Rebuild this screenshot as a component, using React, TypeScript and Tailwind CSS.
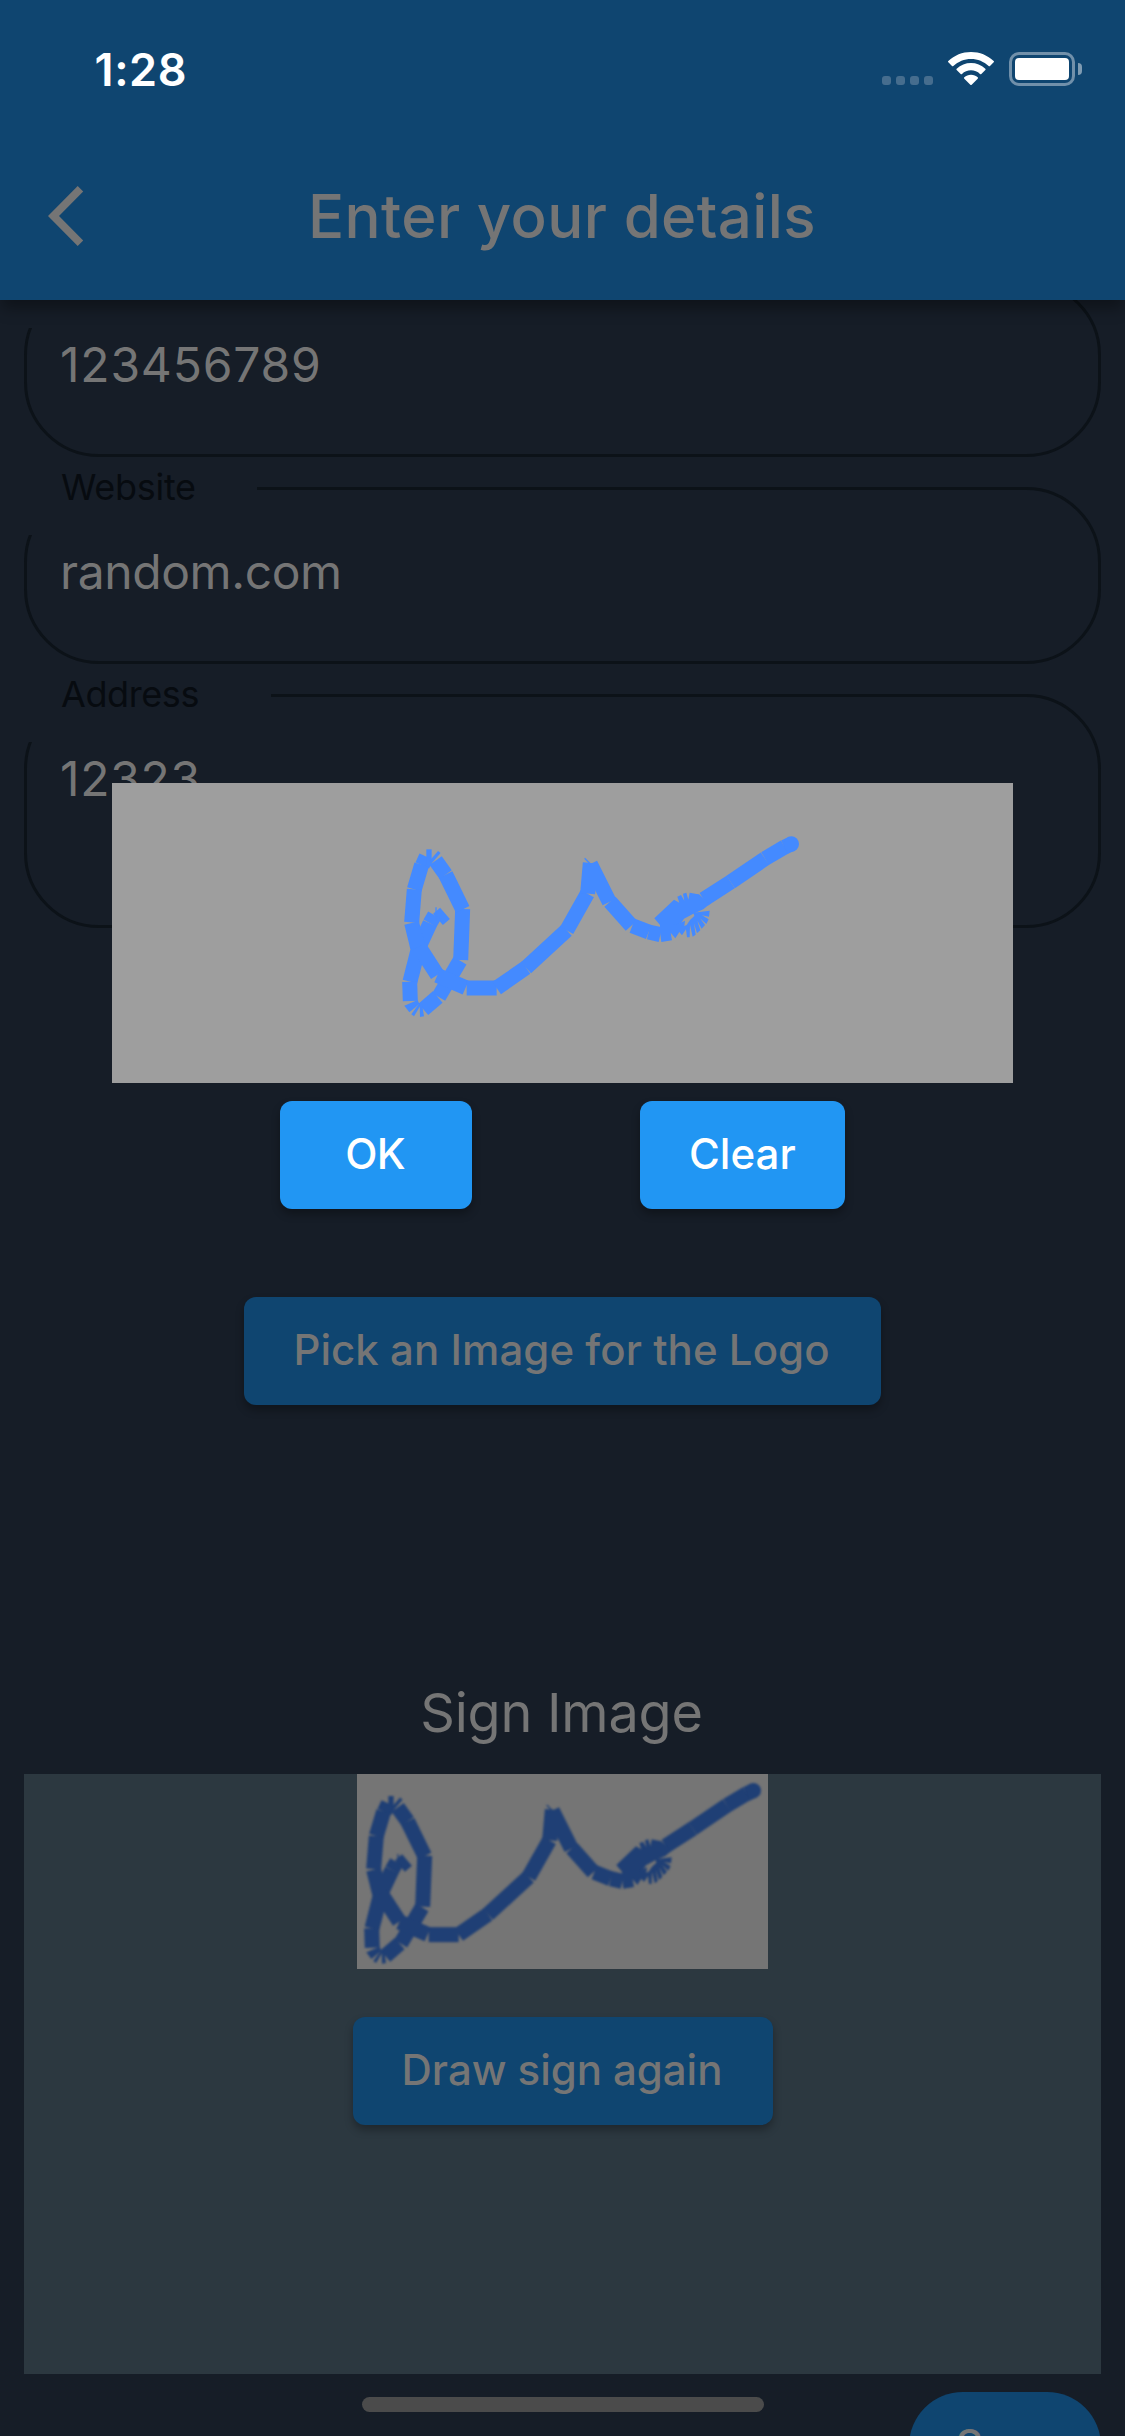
import type { ReactNode } from "react";

type Segment = [number, number, number, number];

const SEGMENTS: Segment[] = [
  [195, 340, 174, 358],
  [164, 346, 150, 370],
  [150, 370, 117, 441],
  [117, 438, 90, 545],
  [89, 545, 91, 603],
  [130, 628, 173, 591],
  [176, 591, 240, 482],
  [242, 480, 248, 327],
  [248, 328, 197, 224],
  [197, 224, 167, 182],
  [139, 170, 127, 196],
  [125, 194, 103, 268],
  [103, 268, 95, 367],
  [95, 369, 113, 442],
  [117, 440, 172, 525],
  [172, 526, 257, 563],
  [260, 564, 350, 564],
  [350, 564, 438, 503],
  [438, 503, 560, 391],
  [560, 391, 622, 281],
  [623, 281, 631, 189],
  [631, 192, 688, 306],
  [690, 305, 754, 377],
  [757, 377, 806, 396],
  [806, 396, 841, 404],
  [971, 298, 1052, 246],
  [1052, 246, 1155, 176],
  [1155, 176, 1214, 141],
];

const LOOP =
  "823,355 882,299 898,308 892,290 903,285 913,302 909,281 919,278 925,299 929,278 950,282 957,283 989,312 970,328 940,341 912,356 904,368 880,380 848,385";
const RING =
  "940,338 989,332 987,350 966,346 986,358 979,372 960,355 975,375 965,386 952,362 961,391 951,400 942,370 947,404 938,410 930,375 929,412 921,412 918,388 906,406 898,396 886,415 872,398 876,421 844,426 840,395 840,375 880,375 898,370 915,362 913,378 920,375 930,360 943,348";

function Signature({ className, viewBox }: { className: string; viewBox: string }) {
  return (
    <svg className={className} viewBox={viewBox} fill="currentColor" stroke="none">
      {SEGMENTS.map(([x1, y1, x2, y2], i) => (
        <line key={i} x1={x1} y1={y1} x2={x2} y2={y2} stroke="currentColor" strokeWidth={45} />
      ))}
      <line x1={1213} y1={142} x2={1234} y2={132} stroke="currentColor" strokeWidth={45} />
      <circle cx={1234} cy={132} r={23} />
      <path d="M168 322V365" stroke="currentColor" strokeWidth={4} />
      <path d="M147 148V195" stroke="currentColor" strokeWidth={16} />
      <path d="M178 156L152 186" stroke="currentColor" strokeWidth={10} />
      <path d="M614 175L632 193" stroke="currentColor" strokeWidth={4} />
      <polygon points="113,600 73,617 88,637 118,612" />
      <polygon points="118,610 94,643 102,649 122,616" />
      <polygon points="119,612 120,651 132,649 126,612" />
      <polygon points={LOOP} />
      <polygon points={RING} />
    </svg>
  );
}

function StatusIcons() {
  return (
    <div className="flex h-[34px] items-start">
      <div className="mb-px flex gap-[5px] self-end">
        {[0, 1, 2, 3].map((i) => (
          <span key={i} className="size-[9px] rounded-[3px] bg-[#466d8e]" />
        ))}
      </div>
      <svg className="ml-[15px] h-[33px] w-[46px]" viewBox="0 0 138 99" fill="white">
        <path d="M69 0C43 0 19 10 1 27Q-1 29 1 31L12 42Q14 44 16 42C30 29 49 21 69 21S108 29 122 42Q124 44 126 42L137 31Q139 29 137 27C119 10 95 0 69 0Z" />
        <path d="M69 33C53 33 38 39 26 50Q24 52 26 54L38 66Q40 68 42 66C49 59 59 55 69 55S89 59 96 66Q98 68 100 66L112 54Q114 52 112 50C100 39 85 33 69 33Z" />
        <path d="M69 68C61 68 54 71 49 76Q47 78 49 80L67 98Q69 100 71 98L89 80Q91 78 89 76C84 71 77 68 69 68Z" />
      </svg>
      <div className="ml-[15px] h-[34px] w-[66px] rounded-[10px] border-[3px] border-[#7190aa] p-[3px]">
        <div className="h-[22px] w-[54px] rounded-[4px] bg-white" />
      </div>
      <div className="ml-[3px] h-3 w-1 self-center rounded-r-full bg-[#7f9bb2]" />
    </div>
  );
}

function Field({ label, value, valueClass, height, notch }: {
  label?: string;
  value: string;
  valueClass: string;
  height: string;
  notch: string;
}) {
  return (
    <div className={`relative rounded-[75px] border-[3px] border-[#0c1218] ${height}`}>
      <div className={`absolute -left-[3px] -top-[3px] h-12 bg-[#161d27] ${notch}`} />
      {label && (
        <span
          className={`absolute left-[34px] -top-[27px] text-[36px] leading-[48px] text-[#070b10] ${
            label === "Website" ? "tracking-[-0.3px]" : "tracking-[-0.4px]"
          }`}
        >
          {label}
        </span>
      )}
      <p className={`relative pl-[33px] pt-[52px] text-[48px] leading-[60px] text-[#757575] ${valueClass}`}>{value}</p>
    </div>
  );
}

function RaisedButton({ className, children }: { className: string; children: ReactNode }) {
  return (
    <button
      className={`flex h-[108px] shrink-0 items-center justify-center rounded-[12px] pb-[3px] text-[42px] font-[550] leading-none whitespace-nowrap shadow-[0_5px_8px_rgba(0,0,0,0.3)] ${className}`}
    >
      {children}
    </button>
  );
}

export default function App() {
  return (
    <div className="relative flex h-[2436px] w-[1125px] flex-col overflow-hidden bg-[#161d27] font-['Inter',sans-serif]">
      <header className="relative z-10 h-[300px] shrink-0 bg-[#0f4570] shadow-[0_10px_14px_-2px_rgba(0,0,0,0.35)]">
        <div className="flex h-[138px] items-center justify-between pl-[94.5px] pr-[43px]">
          <span className="text-[45px] font-semibold leading-none tracking-[0.6px] text-white">1:28</span>
          <StatusIcons />
        </div>
        <div className="relative flex h-[156px] items-center justify-center">
          <svg className="absolute left-12 h-[60px] w-9" viewBox="0 0 36 60" fill="#757575">
            <path d="M29.7 0L35.2 5.5L11 30L35.2 54.5L29.7 60L0 30Z" />
          </svg>
          <h1 className="pr-px text-[60px] font-medium leading-none tracking-[0.38px] text-[#757575]">Enter your details</h1>
        </div>
      </header>

      <main className="-mt-5 flex flex-col px-6">
        <div className="flex flex-col gap-[30px]">
          <Field value="123456789" valueClass="tracking-[0.8px]" height="h-[177px]" notch="w-[233px]" />
          <Field label="Website" value="random.com" valueClass="tracking-[-0.4px]" height="h-[177px]" notch="w-[233px]" />
          <Field label="Address" value="12323" valueClass="tracking-[0.7px]" height="h-[234px]" notch="w-[247px]" />
        </div>

        <RaisedButton className="mt-[369px] w-[637px] self-center bg-[#0f4570] pr-[2px] tracking-[0.05px] text-[#757575]">
          Pick an Image for the Logo
        </RaisedButton>

        <h2 className="mt-[275px] h-[65px] pr-[2px] text-center text-[54px] leading-[65px] tracking-[-0.24px] text-[#757575]">
          Sign Image
        </h2>

        <section className="mt-[29px] flex h-[600px] flex-col items-center bg-[#2c3840]">
          <div className="h-[195px] w-[411px] overflow-hidden bg-[#757575]">
            <Signature className="h-[195px] w-[411px] translate-y-px text-[#1f3f75] blur-[0.8px]" viewBox="45 85 1233 585" />
          </div>
          <RaisedButton className="mt-12 w-[420px] bg-[#0f4570] pr-px tracking-[-0.05px] text-[#757575]">
            Draw sign again
          </RaisedButton>
        </section>

        <button className="mt-[18px] flex h-[108px] w-[192px] shrink-0 items-center justify-center self-end rounded-full bg-[#0f4570] pb-[3px] text-[42px] font-[550] leading-none text-[#757575]">
          Save
        </button>
      </main>

      <div className="absolute left-[362px] top-[2397px] h-[15px] w-[402px] rounded-full bg-[#4b4b4b]" />

      <div role="dialog" className="absolute inset-0 z-20 flex flex-col items-center pt-[783px]">
        <div className="flex h-[300px] w-[901px] shrink-0 bg-[#9e9e9e] pl-[268px] pt-[17px]">
          <Signature className="h-[240px] w-[440px] text-[#448aff]" viewBox="0 0 1320 720" />
        </div>
        <div className="mt-[18px] flex w-[900px] justify-evenly">
          <RaisedButton className="w-[192px] bg-[#2196f3] pr-[2px] tracking-[-0.6px] text-white">OK</RaisedButton>
          <RaisedButton className="w-[205px] bg-[#2196f3] tracking-[0.05px] text-white">Clear</RaisedButton>
        </div>
      </div>
    </div>
  );
}
